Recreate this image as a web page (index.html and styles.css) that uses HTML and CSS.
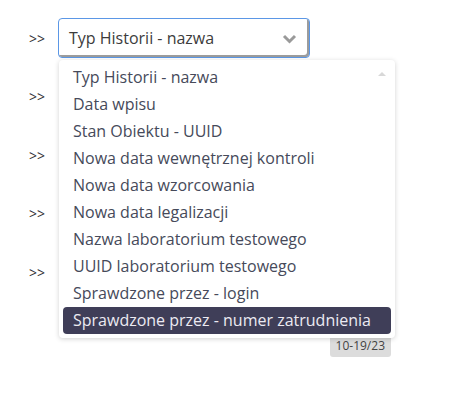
FILE: index.html
```
<!DOCTYPE html>
<html>
	<head>
		<meta charset="utf-8">
		<title>Kolumny</title>
		<link rel="stylesheet" href="styles.css">
	</head>
	<body>
		<div class="columns">
			<div class="column-row">
				<span class="marker">&gt;&gt;</span>
				<div class="picker">
					<div class="picker-box">
						<span class="picker-value">Typ Historii - nazwa</span>
						<svg class="chevron" width="15" height="10" viewBox="0 0 15 10"><path d="M2 2 L7.5 7.5 L13 2" fill="none" stroke="#9a9a9a" stroke-width="3"/></svg>
					</div>
					<div class="picker-menu">
						<span class="scroll-up"></span>
						<div class="picker-option">Typ Historii - nazwa</div>
						<div class="picker-option">Data wpisu</div>
						<div class="picker-option">Stan Obiektu - UUID</div>
						<div class="picker-option">Nowa data wewnętrznej kontroli</div>
						<div class="picker-option">Nowa data wzorcowania</div>
						<div class="picker-option">Nowa data legalizacji</div>
						<div class="picker-option">Nazwa laboratorium testowego</div>
						<div class="picker-option">UUID laboratorium testowego</div>
						<div class="picker-option">Sprawdzone przez - login</div>
						<div class="picker-option active">Sprawdzone przez - numer zatrudnienia</div>
					</div>
				</div>
			</div>
			<div class="column-row"><span class="marker">&gt;&gt;</span><div class="picker-blank"></div></div>
			<div class="column-row"><span class="marker">&gt;&gt;</span><div class="picker-blank"></div></div>
			<div class="column-row"><span class="marker">&gt;&gt;</span><div class="picker-blank"></div></div>
			<div class="column-row"><span class="marker">&gt;&gt;</span><div class="picker-blank"></div></div>
			<div class="footer">
				<span class="date-badge">10-19/23</span>
			</div>
		</div>
	</body>
</html>
```

FILE: styles.css
```
body {
	margin: 0;
	background: #fff;
	font-family: "Open Sans", sans-serif;
	color: #444;
}

.columns {
	display: flex;
	flex-direction: column;
	gap: 18.5px;
	width: 362px;
	padding: 18px 0 0 29px;
}
.column-row {
	display: flex;
	align-items: center;
	height: 40px;
}
.marker {
	width: 29px;
	font-size: 14px;
	color: #333;
}
.picker {
	position: relative;
	width: 252px;
	height: 40px;
}
.picker-blank {
	width: 252px;
	height: 40px;
}
.picker-box {
	display: flex;
	align-items: center;
	justify-content: space-between;
	box-sizing: border-box;
	height: 40px;
	padding: 0 12px 0 10px;
	border: 1px solid #5b97e6;
	border-radius: 4px;
	box-shadow: inset -2px -2px 0 #9c9c9c;
	font-size: 16px;
	color: #3c3c3c;
}
.chevron {
	margin-top: 1px;
}

.picker-menu {
	position: absolute;
	top: 42px;
	left: 1px;
	z-index: 2;
	box-sizing: border-box;
	width: 336px;
	padding: 4px;
	background: #fff;
	border-radius: 4px;
	box-shadow: 0 1px 5px rgba(0, 0, 0, .18);
}
.scroll-up {
	position: absolute;
	top: 12px;
	right: 9px;
	border: 4px solid transparent;
	border-bottom: 4px solid #d8d8d8;
	border-top: 0;
}
.picker-option {
	height: 27px;
	line-height: 27px;
	padding: 0 10px;
	font-size: 16px;
	color: #464a5a;
	white-space: nowrap;
}
.picker-option.active {
	background: #3f3e58;
	color: #eceaf2;
	border-radius: 4px;
}

.footer {
	display: flex;
	justify-content: flex-end;
	margin-top: 23px;
}
.date-badge {
	padding: 3px 6px;
	background: #dcdcdc;
	border-radius: 0 0 3px 3px;
	font-size: 12px;
	color: #444;
}
```
